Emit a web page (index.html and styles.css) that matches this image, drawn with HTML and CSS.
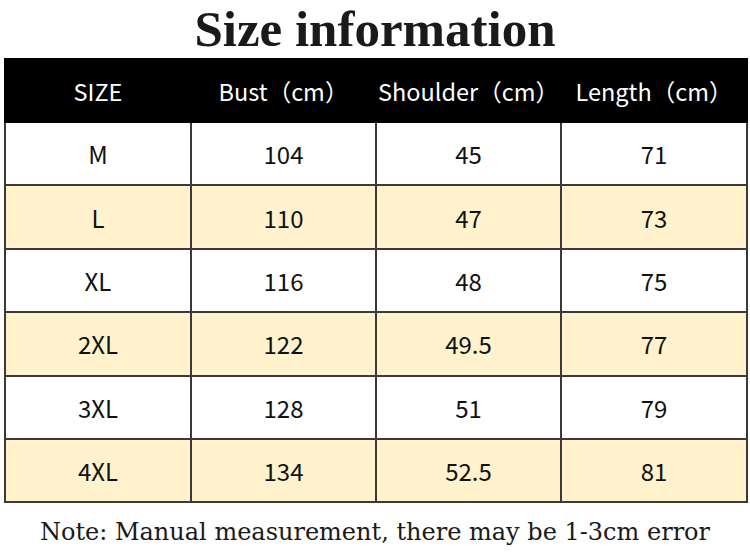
FILE: index.html
```html
<!DOCTYPE html>
<html lang="en">
<head>
<meta charset="utf-8">
<title>Size information</title>
<link rel="stylesheet" href="styles.css">
</head>
<body>
<h1 class="title">Size information</h1>
<table class="sizes">
  <colgroup>
    <col class="c1"><col class="c2"><col class="c3"><col class="c4">
  </colgroup>
  <thead>
    <tr><th>SIZE</th><th>Bust（cm）</th><th>Shoulder（cm）</th><th>Length（cm）</th></tr>
  </thead>
  <tbody>
    <tr><td>M</td><td>104</td><td>45</td><td>71</td></tr>
    <tr class="alt"><td>L</td><td>110</td><td>47</td><td>73</td></tr>
    <tr><td>XL</td><td>116</td><td>48</td><td>75</td></tr>
    <tr class="alt"><td>2XL</td><td>122</td><td>49.5</td><td>77</td></tr>
    <tr><td>3XL</td><td>128</td><td>51</td><td>79</td></tr>
    <tr class="alt"><td>4XL</td><td>134</td><td>52.5</td><td>81</td></tr>
  </tbody>
</table>
<p class="note">Note: Manual measurement, there may be 1-3cm error</p>
</body>
</html>
```
FILE: styles.css
```css
html, body {
  margin: 0;
  padding: 0;
  background: #ffffff;
}
body {
  width: 750px;
  height: 559px;
  overflow: hidden;
}
.title {
  margin: 0;
  height: 58px;
  box-sizing: border-box;
  padding-top: 4px;
  text-align: center;
  font-family: "Liberation Serif", "DejaVu Serif", serif;
  font-weight: bold;
  font-size: 51px;
  line-height: 50px;
  color: #1a1a1a;
  letter-spacing: 0;
  white-space: nowrap;
}
.sizes {
  margin: 0 4px;
  width: 742px;
  border-collapse: collapse;
  table-layout: fixed;
  font-family: "Noto Sans CJK SC", "Noto Sans", sans-serif;
  font-size: 24px;
  color: #111111;
}
.c1 { width: 186px; }
.c2 { width: 185px; }
.c3 { width: 185px; }
.c4 { width: 186px; }
.sizes th {
  height: 61px;
  padding: 0;
  background: #000000;
  color: #ffffff;
  font-weight: normal;
  font-size: 23.5px;
  border: 2px solid #000000;
  text-align: center;
  vertical-align: middle;
}
.sizes td {
  height: 61.4px;
  padding: 0;
  border: 2px solid #3a3a3a;
  text-align: center;
  vertical-align: middle;
}
.sizes tr.alt td {
  background: #fff2cc;
}
.note {
  margin: 14px 0 0;
  text-align: center;
  font-family: "DejaVu Serif", "Liberation Serif", serif;
  font-size: 24px;
  line-height: 30px;
  color: #1a1a1a;
  white-space: nowrap;
}
```
